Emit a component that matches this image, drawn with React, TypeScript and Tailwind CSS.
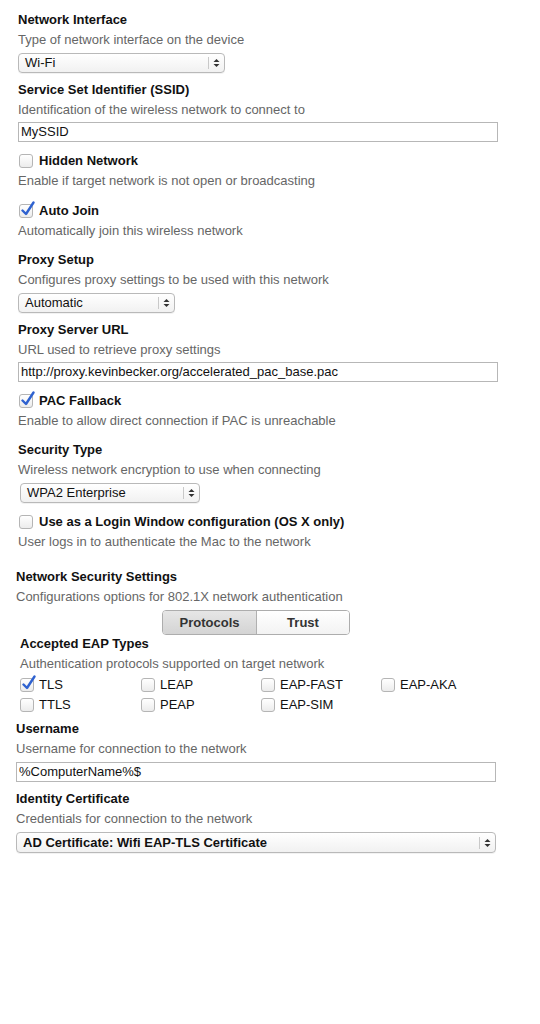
import React from "react";

const font = { fontFamily: '"Liberation Sans", Arial, sans-serif' };

function Arrows() {
  return (
    <svg width="7" height="10" viewBox="0 0 7 10" className="block">
      <path d="M3.5 1 L6.5 4 L0.5 4 Z" fill="#333" />
      <path d="M3.5 9 L6.5 6 L0.5 6 Z" fill="#333" />
    </svg>
  );
}

function Select({
  value,
  width,
  bold = false,
  className = "",
}: {
  value: string;
  width: string;
  bold?: boolean;
  className?: string;
}) {
  return (
    <div
      className={`flex h-[20px] items-center rounded-[4px] border border-[#b9b9b9] bg-gradient-to-b from-white to-[#f1f1f1] shadow-[0_1px_0_rgba(0,0,0,0.05)] ${width} ${className}`}
    >
      <div className={`flex-1 truncate pl-[6px] text-[13px] leading-[18px] text-[#111] ${bold ? "font-bold" : ""}`}>
        {value}
      </div>
      <div className="h-[12px] w-px bg-[#c9c9c9]" />
      <div className="flex w-[15px] justify-center">
        <Arrows />
      </div>
    </div>
  );
}

function TextInput({ value, className = "" }: { value: string; className?: string }) {
  return (
    <div className={`h-[20px] border border-[#b7b7b7] bg-white pl-[2px] text-[13px] leading-[18px] text-[#111] ${className}`}>
      {value}
    </div>
  );
}

function Box({ checked = false }: { checked?: boolean }) {
  return (
    <div className="relative h-[14px] w-[14px] shrink-0 rounded-[3px] border border-[#b5b5b5] bg-gradient-to-b from-white to-[#ececec]">
      {checked ? (
        <svg width="16" height="16" viewBox="0 0 16 16" className="absolute -top-[4px] left-[0px]">
          <path d="M2.5 9.5 L6 13 L13.5 1.5" fill="none" stroke="#2f62d0" strokeWidth="2.4" strokeLinecap="round" strokeLinejoin="round" />
        </svg>
      ) : null}
    </div>
  );
}

function Label({ children, className = "" }: { children: React.ReactNode; className?: string }) {
  return <div className={`h-[20px] text-[13px] font-bold leading-[20px] text-[#111] ${className}`}>{children}</div>;
}

function Desc({ children, className = "" }: { children: React.ReactNode; className?: string }) {
  return <div className={`h-[20px] text-[13px] leading-[20px] text-[#666] ${className}`}>{children}</div>;
}

function CheckLabel({ checked, children, className = "" }: { checked?: boolean; children: React.ReactNode; className?: string }) {
  return (
    <div className={`flex h-[20px] items-center gap-[6px] ${className}`}>
      <Box checked={checked} />
      <span className="text-[13px] font-bold leading-[20px] text-[#111]">{children}</span>
    </div>
  );
}

function EapItem({ checked, label }: { checked?: boolean; label: string }) {
  return (
    <div className="flex h-[20px] items-center gap-[5px]">
      <Box checked={checked} />
      <span className="text-[13px] leading-[20px] text-[#111]">{label}</span>
    </div>
  );
}

export default function App() {
  return (
    <div className="min-h-[1024px] w-[540px] bg-white" style={font}>
      <div className="pt-[10px]">
        <div className="pl-[18px]">
          <Label>Network Interface</Label>
          <Desc>Type of network interface on the device</Desc>
          <Select value="Wi-Fi" width="w-[207px]" className="mt-[3px]" />

          <Label className="mt-[7px]">Service Set Identifier (SSID)</Label>
          <Desc>Identification of the wireless network to connect to</Desc>
          <TextInput value="MySSID" className="mt-[2px] w-[480px]" />

          <CheckLabel className="mt-[9px] pl-[1px]">Hidden Network</CheckLabel>
          <Desc>Enable if target network is not open or broadcasting</Desc>

          <CheckLabel checked className="mt-[10px] pl-[1px]">Auto Join</CheckLabel>
          <Desc>Automatically join this wireless network</Desc>

          <Label className="mt-[9px]">Proxy Setup</Label>
          <Desc>Configures proxy settings to be used with this network</Desc>
          <Select value="Automatic" width="w-[157px]" className="mt-[3px]" />

          <Label className="mt-[7px]">Proxy Server URL</Label>
          <Desc>URL used to retrieve proxy settings</Desc>
          <TextInput value="http://proxy.kevinbecker.org/accelerated_pac_base.pac" className="mt-[2px] w-[480px]" />

          <CheckLabel checked className="mt-[9px] pl-[1px]">PAC Fallback</CheckLabel>
          <Desc>Enable to allow direct connection if PAC is unreachable</Desc>

          <Label className="mt-[9px]">Security Type</Label>
          <Desc>Wireless network encryption to use when connecting</Desc>
          <Select value="WPA2 Enterprise" width="w-[180px]" className="ml-[2px] mt-[3px]" />

          <CheckLabel className="mt-[9px] pl-[1px]">Use as a Login Window configuration (OS X only)</CheckLabel>
          <Desc>User logs in to authenticate the Mac to the network</Desc>
        </div>

        <div className="pl-[16px]">
          <Label className="mt-[15px]">Network Security Settings</Label>
          <Desc>Configurations options for 802.1X network authentication</Desc>
          <div className="ml-[146px] mt-[3px] flex h-[25px] w-[188px] overflow-hidden rounded-[4px] border border-[#adadad]">
            <div className="flex w-[94px] items-center justify-center border-r border-[#b0b0b0] bg-gradient-to-b from-[#e6e6e6] to-[#d4d4d4] text-[13px] font-bold text-[#333]">
              Protocols
            </div>
            <div className="flex flex-1 items-center justify-center bg-gradient-to-b from-white to-[#f3f3f3] text-[13px] font-bold text-[#333]">
              Trust
            </div>
          </div>
        </div>

        <div className="pl-[20px]">
          <Label className="mt-[-1px]">Accepted EAP Types</Label>
          <Desc>Authentication protocols supported on target network</Desc>
          <div className="mt-[1px] grid w-[480px] grid-cols-[121px_120px_120px_120px]">
            <EapItem checked label="TLS" />
            <EapItem label="LEAP" />
            <EapItem label="EAP-FAST" />
            <EapItem label="EAP-AKA" />
            <EapItem label="TTLS" />
            <EapItem label="PEAP" />
            <EapItem label="EAP-SIM" />
          </div>
        </div>

        <div className="pl-[16px]">
          <Label className="mt-[4px]">Username</Label>
          <Desc>Username for connection to the network</Desc>
          <TextInput value="%ComputerName%$" className="mt-[3px] w-[480px]" />

          <Label className="mt-[7px]">Identity Certificate</Label>
          <Desc>Credentials for connection to the network</Desc>
          <Select value="AD Certificate: Wifi EAP-TLS Certificate" bold width="w-[480px]" className="mt-[3px] h-[21px]" />
        </div>
      </div>
    </div>
  );
}
